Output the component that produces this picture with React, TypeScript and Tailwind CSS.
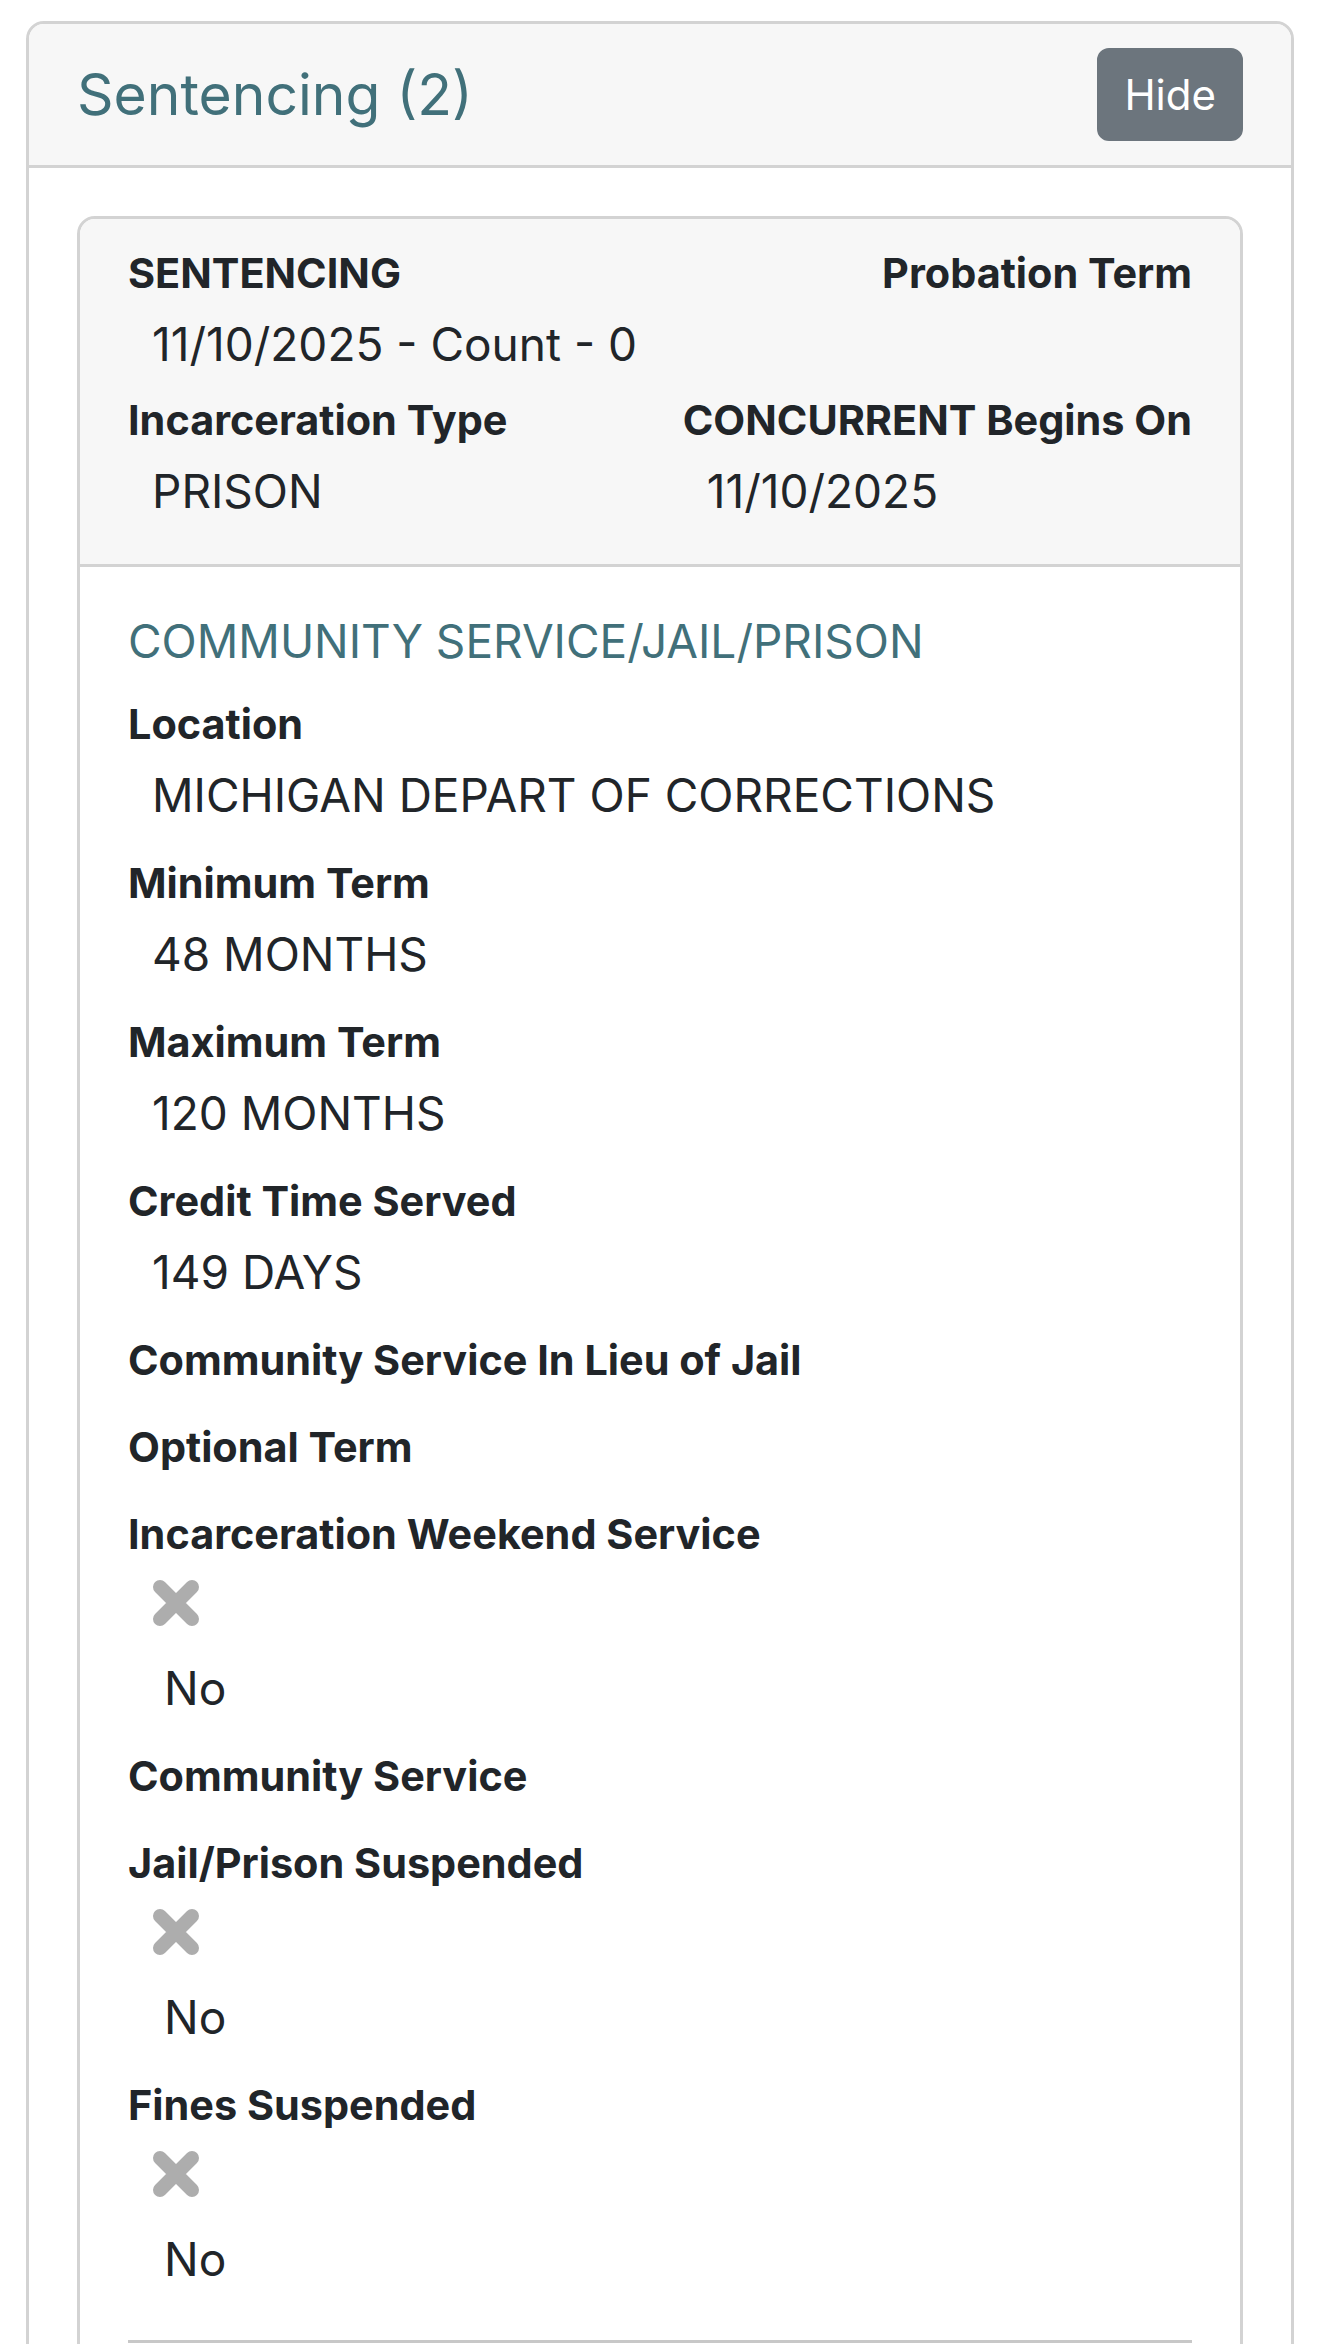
import React from 'react';

const Label = ({ children, right }: { children: React.ReactNode; right?: boolean }) => (
  <div className={`text-[41.4px] leading-[63px] font-bold text-[#212529] ${right ? 'text-right' : ''}`}>{children}</div>
);

const Value = ({ children }: { children: React.ReactNode }) => (
  <div className="mt-[6px] pl-[24px] text-[46px] leading-[66px] text-[#212529]">{children}</div>
);

const XIcon = () => (
  <svg width="50" height="50" viewBox="0 0 50 50" className="block">
    <path d="M9 9 L41 41 M41 9 L9 41" stroke="#adadad" strokeWidth="14" strokeLinecap="round" />
  </svg>
);

const Field = ({ label, value }: { label: string; value?: string }) => (
  <div className="mb-[24px]">
    <Label>{label}</Label>
    {value && <Value>{value}</Value>}
  </div>
);

const BoolField = ({ label }: { label: string }) => (
  <div className="mb-[24px]">
    <Label>{label}</Label>
    <div className="mt-[6px] pl-[23px]">
      <div className="h-[62px] flex items-center">
        <XIcon />
      </div>
      <div className="mt-[21px] pl-[13px] text-[46px] leading-[66px] text-[#212529]">No</div>
    </div>
  </div>
);

export default function App() {
  return (
    <div className="min-h-screen bg-white px-[26px] pt-[21px] font-['Inter',sans-serif] text-[#212529]">
      <div className="rounded-[18px] border-[3px] border-[#d3d3d3] overflow-hidden">
        {/* Header */}
        <div className="flex items-center justify-between bg-[#f7f7f7] border-b-[3px] border-[#d3d3d3] px-[48px] py-[24px]">
          <h5 className="text-[57px] leading-[72px] font-normal text-[#41707a]">Sentencing (2)</h5>
          <button className="h-[93px] px-[24px] rounded-[12px] bg-[#6c757d] border-[3px] border-[#6c757d] text-white text-[42px] leading-[63px]">
            Hide
          </button>
        </div>

        <div className="px-[48px] pt-[48px] pb-[200px]">
          <div className="rounded-[18px] border-[3px] border-[#d3d3d3] overflow-hidden">
            {/* Sentence summary */}
            <div className="bg-[#f7f7f7] border-b-[3px] border-[#d3d3d3] px-[48px] pt-[23px] pb-[40px]">
              <div className="flex justify-between">
                <div>
                  <Label>SENTENCING</Label>
                  <Value>11/10/2025 - Count - 0</Value>
                </div>
                <div>
                  <Label right>Probation Term</Label>
                </div>
              </div>
              <div className="mt-[12px] flex justify-between">
                <div>
                  <Label>Incarceration Type</Label>
                  <Value>PRISON</Value>
                </div>
                <div>
                  <Label>CONCURRENT Begins On</Label>
                  <Value>11/10/2025</Value>
                </div>
              </div>
            </div>

            {/* Details */}
            <div className="bg-white px-[48px] pt-[48px] pb-[100px]">
              <h6 className="text-[46px] leading-[52px] font-normal text-[#41707a] mb-[26px]">COMMUNITY SERVICE/JAIL/PRISON</h6>
              <Field label="Location" value="MICHIGAN DEPART OF CORRECTIONS" />
              <Field label="Minimum Term" value="48 MONTHS" />
              <Field label="Maximum Term" value="120 MONTHS" />
              <Field label="Credit Time Served" value="149 DAYS" />
              <Field label="Community Service In Lieu of Jail" />
              <Field label="Optional Term" />
              <BoolField label="Incarceration Weekend Service" />
              <Field label="Community Service" />
              <BoolField label="Jail/Prison Suspended" />
              <BoolField label="Fines Suspended" />
              <hr className="mt-[48px] border-0 border-t-[3px] border-[#c8c8c8]" />
            </div>
          </div>
        </div>
      </div>
    </div>
  );
}
